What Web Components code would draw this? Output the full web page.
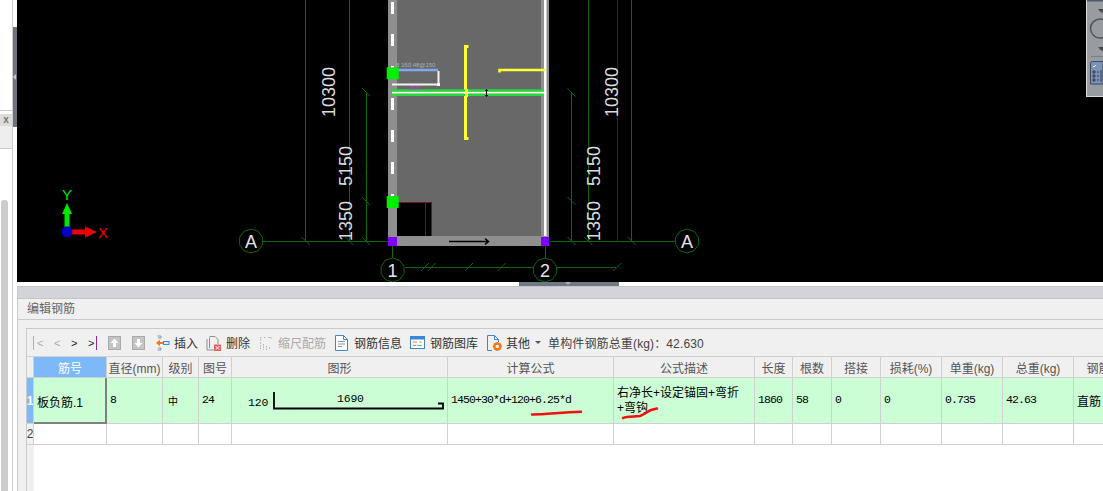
<!DOCTYPE html>
<html lang="zh">
<head>
<meta charset="utf-8">
<title>编辑钢筋</title>
<style>
    html, body { margin: 0; height: 100%; overflow: hidden; background: #fff; }
    body { font-family: "Liberation Sans", "Noto Sans CJK SC", sans-serif; font-size: 12px; }
</style>
</head>
<body>
<app-shell>
    <side-rail slot="rail"></side-rail>
    <cad-view slot="view"></cad-view>
    <rebar-panel slot="panel">
        <rebar-toolbar slot="toolbar">
            <tool-btn kind="icon" style="margin-left:7px">
                <svg slot="icon" width="13" height="14" viewBox="0 0 13 14"><rect x=".5" y=".5" width="12" height="13" fill="#c4c4c4" stroke="#aaa"/><path d="M6.5 2.5 10.5 7H8v4H5V7H2.500z" fill="#fff"/></svg>
            </tool-btn>
            <tool-btn kind="icon" style="margin-left:11px">
                <svg slot="icon" width="13" height="14" viewBox="0 0 13 14"><rect x=".5" y=".5" width="12" height="13" fill="#c4c4c4" stroke="#aaa"/><path d="M6.500 11.500 2.500 7H5V3h3v4h2.500z" fill="#fff"/></svg>
            </tool-btn>
            <tool-btn style="margin-left:11px;--gap:4px">
                <svg slot="icon" width="14" height="16" viewBox="0 0 14 16"><path d="M1.500 1H5M5 1v2H2M2 13h3v2H1.500" fill="none" stroke="#8a96a6"/><path d="M0 8 4 4.800v2.200h3v2H4v2.200z" fill="#f07a14"/><rect x="7.500" y="6.500" width="5.500" height="3" fill="#d8e8f8" stroke="#3d8ad8"/></svg>
                插入
            </tool-btn>
            <tool-btn style="margin-left:8px;--gap:5px">
                <svg slot="icon" width="15" height="16" viewBox="0 0 15 16"><path d="M3.500 2.500V13M1 4v11h8M3.500 1.500H9l3 3V9" fill="none" stroke="#8b8f96"/><rect x="8" y="9.500" width="7" height="6.500" fill="#e2605c"/><path d="m9.800 11.200 3.400 3.400m0-3.400-3.400 3.400" stroke="#fff"/></svg>
                删除
            </tool-btn>
            <tool-btn disabled style="margin-left:10px;--gap:6px">
                <svg slot="icon" width="12" height="14" viewBox="0 0 12 14"><path d="M0 1.500h2m2 0h2m2 0h3M11 1v2M.5 3v2M.5 6.500V14M3.500 8v6M6.500 10v4M9.500 11.500V14" fill="none" stroke="#b4b4b4" stroke-dasharray="1.500 1"/></svg>
                缩尺配筋
            </tool-btn>
            <tool-btn style="margin-left:9px;--gap:6px">
                <svg slot="icon" width="13" height="16" viewBox="0 0 13 16"><path d="M.5.500H8.500L12.500 4.500V15.500H.5z" fill="#fff" stroke="#3d86d4"/><path d="M8.500.500V4.500H12.500" fill="none" stroke="#3d86d4"/><path d="M3 6.500h7M3 9h7M3 11.500h4" stroke="#8a96a6"/></svg>
                钢筋信息
            </tool-btn>
            <tool-btn style="margin-left:8px;--gap:5px">
                <svg slot="icon" width="15" height="13" viewBox="0 0 15 13"><rect x=".5" y=".5" width="14" height="12" fill="#fff" stroke="#3d86d4"/><rect x="1" y="1" width="13" height="2.500" fill="#3d86d4"/><path d="M3 6h4" stroke="#8a96a6"/><path d="M9 6h3" stroke="#d9b36a"/><path d="M3 9.500h3" stroke="#e07a5a"/><path d="M7 9.500h5" stroke="#7fb27f"/></svg>
                钢筋图库
            </tool-btn>
            <tool-btn style="margin-left:9px;--gap:4px">
                <svg slot="icon" width="15" height="16" viewBox="0 0 15 16"><path d="M5 15.500H.5V.5H7.500L11.500 4.500V7M7.500.5V4.500H11.500" fill="none" stroke="#3d86d4"/><circle cx="10.300" cy="11.500" r="3" fill="none" stroke="#f07a14" stroke-width="2.400"/><path d="M10.300 7v9M5.800 11.500h9M7.200 8.400l6.200 6.200M13.400 8.400l-6.200 6.200" stroke="#f07a14" stroke-width="1.300" stroke-dasharray="1.400 6.200" stroke-dashoffset="0"/></svg>
                其他
            </tool-btn>
            <span class="drop" slot="tail"></span>
            <span slot="tail">单构件钢筋总重(kg)：42.630</span>
        </rebar-toolbar>
        <rebar-grid slot="grid"></rebar-grid>
    </rebar-panel>
</app-shell>

<script>
class AppShell extends HTMLElement {
    constructor() {
        super();
        this.attachShadow({ mode: 'open' });
        this.shadowRoot.innerHTML = `
            <style>
                :host { display: grid; grid-template-columns: 17px 1086px; grid-template-rows: 282px 4px 205px; width: 1103px; height: 491px; overflow: hidden; }
                .rail { grid-row: 1 / 4; display: block; }
                .handle { grid-column: 2; position: relative; background: #fff; }
                .handle div { position: absolute; left: 502px; top: 0; width: 100px; height: 4px; background: #6d7a86; }
                .handle div::after { content: ''; position: absolute; left: 46px; top: 0; border: 3.500px solid transparent; border-top-color: #aab2ba; border-bottom: 0; }
            </style>
            <div class="rail"><slot name="rail"></slot></div>
            <slot name="view"></slot>
            <div class="handle"><div></div></div>
            <slot name="panel"></slot>
        `;
    }
}

class SideRail extends HTMLElement {
    constructor() {
        super();
        this.attachShadow({ mode: 'open' });
        this.shadowRoot.innerHTML = `
            <style>
                :host { display: grid; grid-template-columns: 12px 1px 4px; height: 491px; background: #fff; }
                .dock { display: grid; grid-template-rows: 110px 1px 3px 12px 22px 1px 1fr; position: relative; }
                .rule { background: #ccc; }
                .bar { background: #dcdcdc; color: #777; font: bold 10px/12px "Liberation Sans", sans-serif; text-align: center; }
                .tab { background: #eee; }
                .thumb { position: absolute; left: 1px; top: 200px; bottom: 0; width: 7px; background: #ccc; border-radius: 3px 3px 0 0; }
                .edge { background: #ccc; }
                .grip { display: grid; grid-template-rows: 27px 100px 1fr; }
                .grip .dark { background: #6d747c; position: relative; }
                .grip .dark::after { content: ''; position: absolute; left: 0; top: 47px; border: 3px solid transparent; border-right-color: #c4c8cc; border-left: 0; }
            </style>
            <div class="dock">
                <div></div>
                <div class="rule"></div>
                <div></div>
                <div class="bar">x</div>
                <div class="tab"></div>
                <div class="rule"></div>
                <div></div>
                <div class="thumb"></div>
            </div>
            <div class="edge"></div>
            <div class="grip"><div></div><div class="dark"></div><div></div></div>
        `;
    }
}

class CadView extends HTMLElement {
    constructor() {
        super();
        this.attachShadow({ mode: 'open' });
    }

    connectedCallback() {
        const dark = '#0a6a0a';
        // slash ticks on the dimension lines
        const back = [[366, 92], [366, 201], [366, 241], [305.7, 241], [349.3, 241], [571.5, 92.500], [571.5, 201], [571.5, 241], [588.3, 241], [631.7, 241]];
        const fwd = [[425, 267], [431.7, 267], [469, 267], [501.7, 267], [617.3, 267]];
        const ticks = back.map(([x, y]) => `M${x - 4} ${y - 4}L${x + 4} ${y + 4}`).join('')
            + fwd.map(([x, y]) => `M${x - 4} ${y + 4}L${x + 4} ${y - 4}`).join('');
        const octagon = (cx, cy, label) => {
            const pts = [];
            for (let i = 0; i < 10; i++) {
                const a = Math.PI * 2 * i / 10 + Math.PI / 2;
                pts.push((cx + 12 * Math.cos(a)).toFixed(1) + ',' + (cy + 12 * Math.sin(a)).toFixed(1));
            }
            return `<polygon points="${pts.join(' ')}" fill="#000" stroke="${dark}"/>
                <text x="${cx}" y="${cy + 6.500}" text-anchor="middle" font-size="18" fill="#e6e6e6">${label}</text>`;
        };
        const vert = (x, y, label) => `<text transform="translate(${x} ${y}) rotate(-90)" font-size="18" fill="#dcdcdc">${label}</text>`;
        this.shadowRoot.innerHTML = `
            <style>
                :host { display: block; background: #000; width: 1086px; height: 282px; overflow: hidden; }
                svg { display: block; font-family: "Liberation Sans", sans-serif; }
            </style>
            <svg width="1086" height="282" viewBox="17 0 1086 282">
                <g fill="none" stroke="${dark}" shape-rendering="crispEdges">
                    <path d="M263 241.500H388M550 241.500H675"/>
                    <path d="M305.500 0V241M349.500 0V241M366.500 93V241M571.500 93V241M588.500 0V241M631.500 0V241"/>
                    <path d="M392.500 246V258M545.500 246V258M392.500 282V282M405 267.500H616"/>
                </g>
                <path d="${ticks}" stroke="${dark}" fill="none"/>
                <path d="M617.500 0V241" stroke="#6b1010" shape-rendering="crispEdges"/>

                <rect x="388" y="0" width="161" height="246" fill="#686868"/>
                <rect x="388" y="0" width="9" height="246" fill="#8f8f8f"/>
                <rect x="541" y="0" width="8" height="246" fill="#8f8f8f"/>
                <rect x="388" y="236" width="161" height="10" fill="#8f8f8f"/>
                <path d="M392.500 2V14M392.500 34V46M392.500 66V78M392.500 98V110M392.500 130V142M392.500 162V174M392.500 194V206" stroke="#fff" stroke-width="3"/>
                <rect x="544" y="0" width="2.500" height="236" fill="#fff"/>

                <rect x="397" y="202" width="35" height="34" fill="#000"/>
                <path d="M397 202.500H431.500V236M425.500 202.500V236" fill="none" stroke="#7a1414" shape-rendering="crispEdges"/>
                <path d="M449 241.500H488M485 238.500l3.500 3-3.500 3" fill="none" stroke="#000" stroke-width="1.500"/>

                <path d="M468.500 46.500H465.500V138.500H468.500" fill="none" stroke="#ffff33" stroke-width="3"/>
                <path d="M499.500 72.500V70H546" fill="none" stroke="#ffff33" stroke-width="2.500"/>
                <rect x="392" y="89.300" width="152" height="2.500" fill="#22dd33"/>
                <rect x="392" y="93.500" width="152" height="2.500" fill="#22dd33"/>
                <rect x="392" y="91.800" width="152" height="1.700" fill="#fff"/>
                <rect x="465" y="89" width="3" height="8" fill="#ffff33"/>
                <path d="M486.500 90V96M485 91l1.500-1.500L488 91M485 95l1.500 1.500L488 95" fill="none" stroke="#000"/>
                <path d="M398 70H438" stroke="#7fa8f0" stroke-width="2.500"/>
                <path d="M438.500 71V84.500H392" fill="none" stroke="#f4f4f4" stroke-width="2"/>
                <rect x="437" y="83" width="3" height="3" fill="#fff"/>
                <text x="396" y="66.500" font-size="6" fill="#b0b0b0">8 160.48@150</text>
                <text x="409" y="90" font-size="5.500" fill="#c040d0">1631</text>

                <rect x="386.700" y="67.300" width="12" height="12" fill="#00ee00"/>
                <rect x="386.700" y="196" width="12" height="12" fill="#00ee00"/>
                <rect x="388" y="237" width="9" height="9" fill="#8000ff"/>
                <rect x="541" y="237" width="8" height="9" fill="#8000ff"/>

                ${vert(335, 117, '10300')}${vert(352, 186, '5150')}${vert(352, 241, '1350')}
                ${vert(618, 117, '10300')}${vert(600, 186, '5150')}${vert(600, 241, '1350')}
                ${octagon(251, 241, 'A')}${octagon(687, 241, 'A')}
                ${octagon(392.6, 270, '1')}${octagon(545, 270, '2')}

                <path d="M62 214 67 203 72 214H69.500V227H64.500V214Z" fill="#00e800"/>
                <path d="M72 229.500H85V226.500L97 232 85 237.500V234.500H72Z" fill="#f00000"/>
                <circle cx="67" cy="231.700" r="5.500" fill="#0000c0"/>
                <text x="67" y="200" text-anchor="middle" font-size="15" fill="#00e800">Y</text>
                <text x="103" y="237.500" text-anchor="middle" font-size="15" fill="#f00000">X</text>

                <rect x="1086.500" y="-1" width="18" height="97.500" fill="#989ba0" stroke="#d8dadc"/>
                <rect x="1087" y="0" width="16" height="1.500" fill="#4e5c70"/>
                <path d="M1098 9h5v3.500h-2zM1098 47h5v3.500h-2z" fill="#444a52"/>
                <circle cx="1100" cy="28.600" r="9.500" fill="none" stroke="#4e5660" stroke-width="1.500"/>
                <path d="M1091 56.500H1103" stroke="#7d8084"/>
                <path d="M1090.500 84V63.500Q1090.500 61.500 1092.500 61.500H1103V84Z" fill="#7d93b4" stroke="#3c4a60"/>
                <path d="M1093 66l1 1 2-2" fill="none" stroke="#fff" stroke-width=".8"/>
                <path d="M1093 71h2v2h-2zM1093 75h2v2h-2zM1093 79h2v2h-2zM1097 72h2M1097 76h2M1097 80h2M1101 70V82" fill="none" stroke="#1f2a3a" stroke-width=".8"/>
            </svg>
        `;
    }
}

class RebarPanel extends HTMLElement {
    constructor() {
        super();
        this.attachShadow({ mode: 'open' });
        this.shadowRoot.innerHTML = `
            <style>
                :host { display: flex; flex-direction: column; position: relative; width: 1086px; height: 205px; overflow: hidden; background: #f0f0f0; box-sizing: border-box; border-left: 1px solid #c9cad0; }
                .band { height: 11px; background: #d3d4d9; border-top: 1px solid #c4c5cb; border-bottom: 1px solid #c4c5cb; box-sizing: content-box; flex: none; }
                .title { height: 20px; line-height: 20px; padding-left: 9px; color: #666; border-bottom: 1px solid #c9cad0; flex: none; }
                .body { margin: 8px 0 0 8px; flex: 1; display: flex; flex-direction: column; border-left: 1px solid #c9cad0; border-top: 1px solid #c9cad0; min-height: 0; }
                .marks { position: absolute; left: 0; top: 0; pointer-events: none; }
            </style>
            <div class="band"></div>
            <div class="title">编辑钢筋</div>
            <div class="body">
                <slot name="toolbar"></slot>
                <slot name="grid"></slot>
            </div>
            <svg class="marks" width="1085" height="205" viewBox="18 286 1085 205" fill="none" stroke="#f01010" stroke-linecap="round">
                <path d="M532 414.500C546 414.500 560 412.500 581 411.800" stroke-width="2.500"/>
                <path d="M623 418C628 416 635 417 640 416C646 414 648 411 651 410L657 408.500" stroke-width="2.500"/>
            </svg>
        `;
    }
}

class RebarToolbar extends HTMLElement {
    constructor() {
        super();
        this.attachShadow({ mode: 'open' });
        this.shadowRoot.innerHTML = `
            <style>
                :host { display: flex; align-items: center; height: 27px; flex: none; color: #333; white-space: nowrap; }
                .nav { display: flex; padding-left: 6px; }
                .nav span { width: 17px; box-sizing: border-box; padding-left: 4px; color: #222; font: 11px/14px "Liberation Sans", sans-serif; position: relative; }
                .nav .off { color: #aaa; }
                .nav i { position: absolute; top: 0; width: 1px; height: 14px; }
                ::slotted([slot=tail]) { margin-left: 7px; color: #444; letter-spacing: .13px; }
                ::slotted(.drop) { margin-left: 5px; width: 0; height: 0; border: 3px solid transparent; border-top: 3px solid #555; border-bottom: 0; }
            </style>
            <div class="nav">
                <span class="off"><i style="left:0;background:#b0b0b0"></i>&lt;</span>
                <span class="off">&lt;</span>
                <span>&gt;</span>
                <span>&gt;<i style="left:12px;background:#8a2a8a"></i></span>
            </div>
            <slot></slot>
            <slot name="tail"></slot>
        `;
    }
}

class ToolBtn extends HTMLElement {
    constructor() {
        super();
        this.attachShadow({ mode: 'open' });
        this.shadowRoot.innerHTML = `
            <style>
                :host { display: inline-flex; align-items: center; gap: var(--gap, 0); }
                :host([disabled]) { color: #aaa; }
                .icon { display: flex; }
            </style>
            <span class="icon"><slot name="icon"></slot></span>
            <span><slot></slot></span>
        `;
    }
}

class RebarGrid extends HTMLElement {
    constructor() {
        super();
        this.attachShadow({ mode: 'open' });
    }

    connectedCallback() {
        const heads = ['筋号', '直径(mm)', '级别', '图号', '图形', '计算公式', '公式描述', '长度', '根数', '搭接', '损耗(%)', '单重(kg)', '总重(kg)', '钢筋类型'];
        const row = [
            ['板负筋.1', 'active'], ['8', 'num'], ['中', 'mid'], ['24', 'num'], ['', 'shape'],
            ['1450+30*d+120+6.25*d', 'num'], ['右净长+设定锚固+弯折<br>+弯钩', 'desc'],
            ['1860', 'num'], ['58', 'num'], ['0', 'num'], ['0', 'num'], ['0.735', 'num'], ['42.63', 'num'], ['直筋', 'txt']
        ];
        const shape = `
            <svg width="215" height="45" viewBox="232 378 215 45">
                <text x="248" y="406" font-family="Liberation Mono, monospace" font-size="11.500" letter-spacing="-.2" fill="#000">120</text>
                <text x="337" y="402" font-family="Liberation Mono, monospace" font-size="11.500" letter-spacing="-.2" fill="#000">1690</text>
                <path d="M274 392V408.500H443V403.500H438" fill="none" stroke="#000" stroke-width="1.800"/>
            </svg>`;
        this.shadowRoot.innerHTML = `
            <style>
                :host { display: block; flex: 1; min-height: 0; background: #fff; color: #000; }
                .table { display: grid; grid-template-columns: 7px 73px 56px 36px 33px 216px 166px 141px 38px 39px 49px 61px 61px 71px 74px; grid-template-rows: 22px 46px 21px; }
                .table > div { box-sizing: border-box; border-right: 1px solid #d0d0d0; border-bottom: 1px solid #d0d0d0; display: flex; align-items: center; overflow: hidden; white-space: nowrap; }
                .head { background: #f0f0f0; color: #555; justify-content: center; border-top: 1px solid #d0d0d0; }
                .head.on { background: #7db8f8; color: #fff; }
                .rowno { background: #f0f0f0; color: #444; font-size: 12px; justify-content: center; }
                .rowno.on { background: #7db8f8; color: #fff; font-weight: bold; }
                .g { background: #ccfed5; padding-left: 3px; }
                .num { font: 11.500px "Liberation Mono", monospace; letter-spacing: -.9px; padding-bottom: 2px; }
                .mid { padding-left: 5px; font-size: 10px; }
                .active { border-right: 2px solid #808080 !important; border-bottom: 2px solid #808080 !important; padding-top: 2px; }
                .desc { line-height: 15px; white-space: normal !important; }
                .shape { padding: 0; }
                .shape svg { display: block; }
                .rest { width: 7px; height: 47px; background: #f0f0f0; }
            </style>
            <div class="table">
                <div class="head"></div>
                ${heads.map((h, i) => `<div class="head ${i === 0 ? 'on' : ''}">${h}</div>`).join('')}
                <div class="rowno on">1</div>
                ${row.map(([v, cls]) => `<div class="g ${cls}">${cls === 'shape' ? shape : v}</div>`).join('')}
                <div class="rowno">2</div>
                ${heads.map(() => '<div></div>').join('')}
            </div>
            <div class="rest"></div>
        `;
    }
}

window.customElements.define('app-shell', AppShell);
window.customElements.define('side-rail', SideRail);
window.customElements.define('cad-view', CadView);
window.customElements.define('rebar-panel', RebarPanel);
window.customElements.define('rebar-toolbar', RebarToolbar);
window.customElements.define('tool-btn', ToolBtn);
window.customElements.define('rebar-grid', RebarGrid);
</script>
</body>
</html>
